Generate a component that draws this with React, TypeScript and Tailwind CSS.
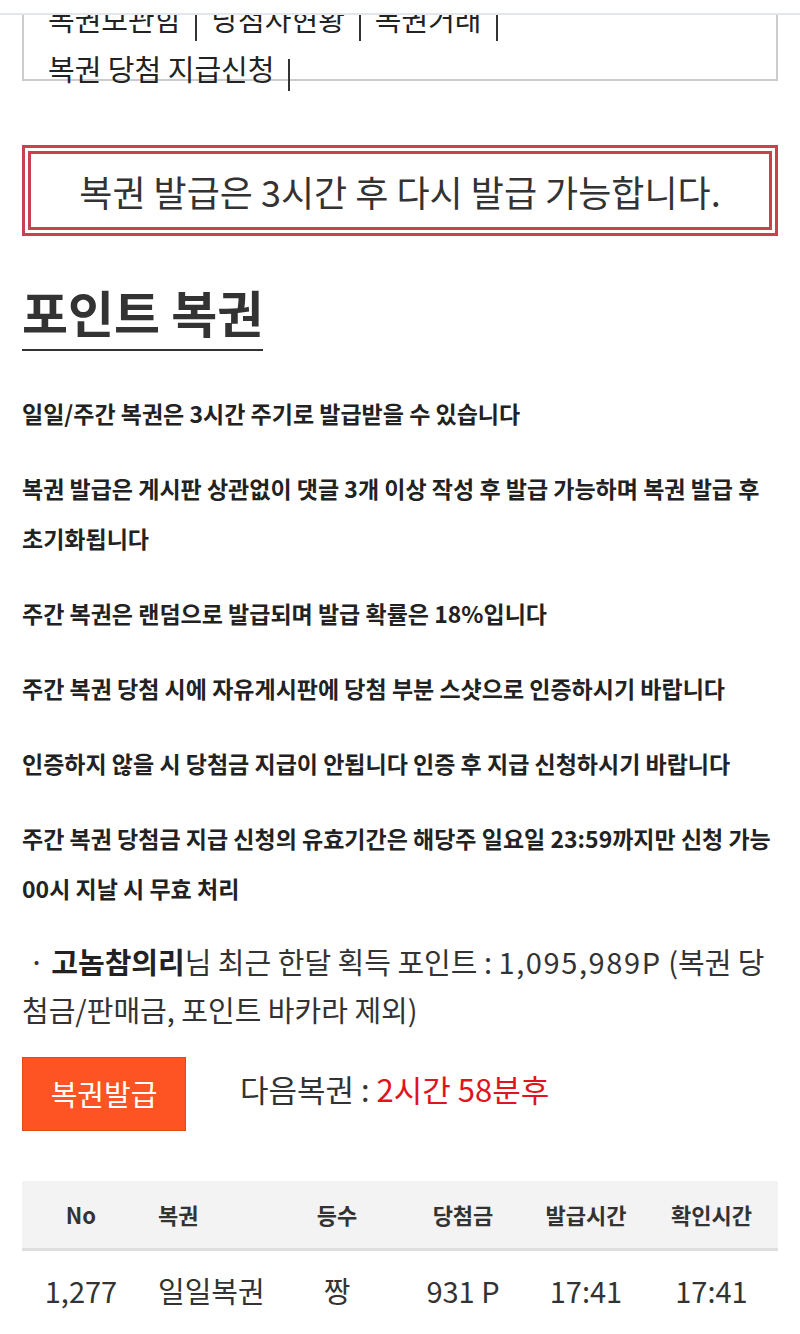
import React from "react";

const Sep = () => (
  <span className="inline-block w-[2px] h-[32px] bg-[#333] align-middle mx-[14px] relative top-[2px]" />
);

export default function App() {
  const font = { fontFamily: '"Noto Sans CJK KR", "Noto Sans", sans-serif' };
  return (
    <div className="w-[800px] h-[1334px] overflow-hidden bg-white text-[#333]" style={font}>
      <div className="relative z-10 h-[15px] bg-white border-b-2 border-[#e3e7eb]" />
      <div className="mx-[22px] -mt-[34px] h-[100px] border-2 border-[#cccccc] pt-[10px] pl-[24px] text-[29px] leading-[50px] text-[#222] whitespace-nowrap">
        <div>
          복권보관함<Sep />당첨자현황<Sep />복권거래<Sep />
        </div>
        <div>
          복권 당첨 지급신청<Sep />
        </div>
      </div>

      <div className="mx-[22px] mt-[64px] h-[91px] border-[9px] border-double border-[#c9404f] flex items-center justify-center text-[36px] text-[#333] whitespace-nowrap">
        복권 발급은 3시간 후 다시 발급 가능합니다.
      </div>

      <div className="px-[22px]">
        <h2 className="inline-block mt-[40px] text-[50px] font-bold leading-[71px] pb-[2px] border-b-2 border-[#333] text-[#333]">
          포인트 복권
        </h2>

        <div className="mt-[37px] text-[23px] font-bold leading-[50px] text-[#222] break-keep">
          <p className="mb-[25px]">일일/주간 복권은 3시간 주기로 발급받을 수 있습니다</p>
          <p className="mb-[25px]">
            복권 발급은 게시판 상관없이 댓글 3개 이상 작성 후 발급 가능하며 복권 발급 후 초기화됩니다
          </p>
          <p className="mb-[25px]">주간 복권은 랜덤으로 발급되며 발급 확률은 18%입니다</p>
          <p className="mb-[25px]">주간 복권 당첨 시에 자유게시판에 당첨 부분 스샷으로 인증하시기 바랍니다</p>
          <p className="mb-[25px]">인증하지 않을 시 당첨금 지급이 안됩니다 인증 후 지급 신청하시기 바랍니다</p>
          <p className="mb-[24px]">
            주간 복권 당첨금 지급 신청의 유효기간은 해당주 일요일 23:59까지만 신청 가능 00시 지날 시 무효 처리
          </p>
        </div>

        <p className="text-[29px] leading-[48px] text-[#333]">
          {"\u00a0·\u00a0"}
          <b className="font-bold text-[#222]">고놈참의리</b>님 최근 한달 획득 포인트 :{" "}
          <span className="tracking-[1.6px]">1,095,989P</span> (복권 당첨금/판매금, 포인트 바카라 제외)
        </p>

        <div className="mt-[24px] flex items-center">
          <button className="w-[164px] h-[74px] bg-[#fe5322] border border-[#e24a1e] text-white text-[29px] flex items-center justify-center">
            복권발급
          </button>
          <div className="ml-[54px] -mt-[10px] text-[31px] text-[#333] whitespace-nowrap">
            다음복권 : <span className="text-[#e0141c]">2시간 58분후</span>
          </div>
        </div>

        <div className="mt-[50px]">
          <div className="grid grid-cols-[118px_135px_124px_128px_118px_133px] h-[70px] items-center bg-[#f3f3f3] border-b-[3px] border-[#dedede] text-[22px] font-bold text-[#333]">
            <div className="text-center">No</div>
            <div className="pl-[18px]">복권</div>
            <div className="text-center">등수</div>
            <div className="text-center">당첨금</div>
            <div className="text-center">발급시간</div>
            <div className="text-center">확인시간</div>
          </div>
          <div className="grid grid-cols-[118px_135px_124px_128px_118px_133px] h-[80px] items-center text-[29px] text-[#333]">
            <div className="text-center">1,277</div>
            <div className="pl-[18px]">일일복권</div>
            <div className="text-center">짱</div>
            <div className="text-center">931 P</div>
            <div className="text-center">17:41</div>
            <div className="text-center">17:41</div>
          </div>
        </div>
      </div>
    </div>
  );
}
